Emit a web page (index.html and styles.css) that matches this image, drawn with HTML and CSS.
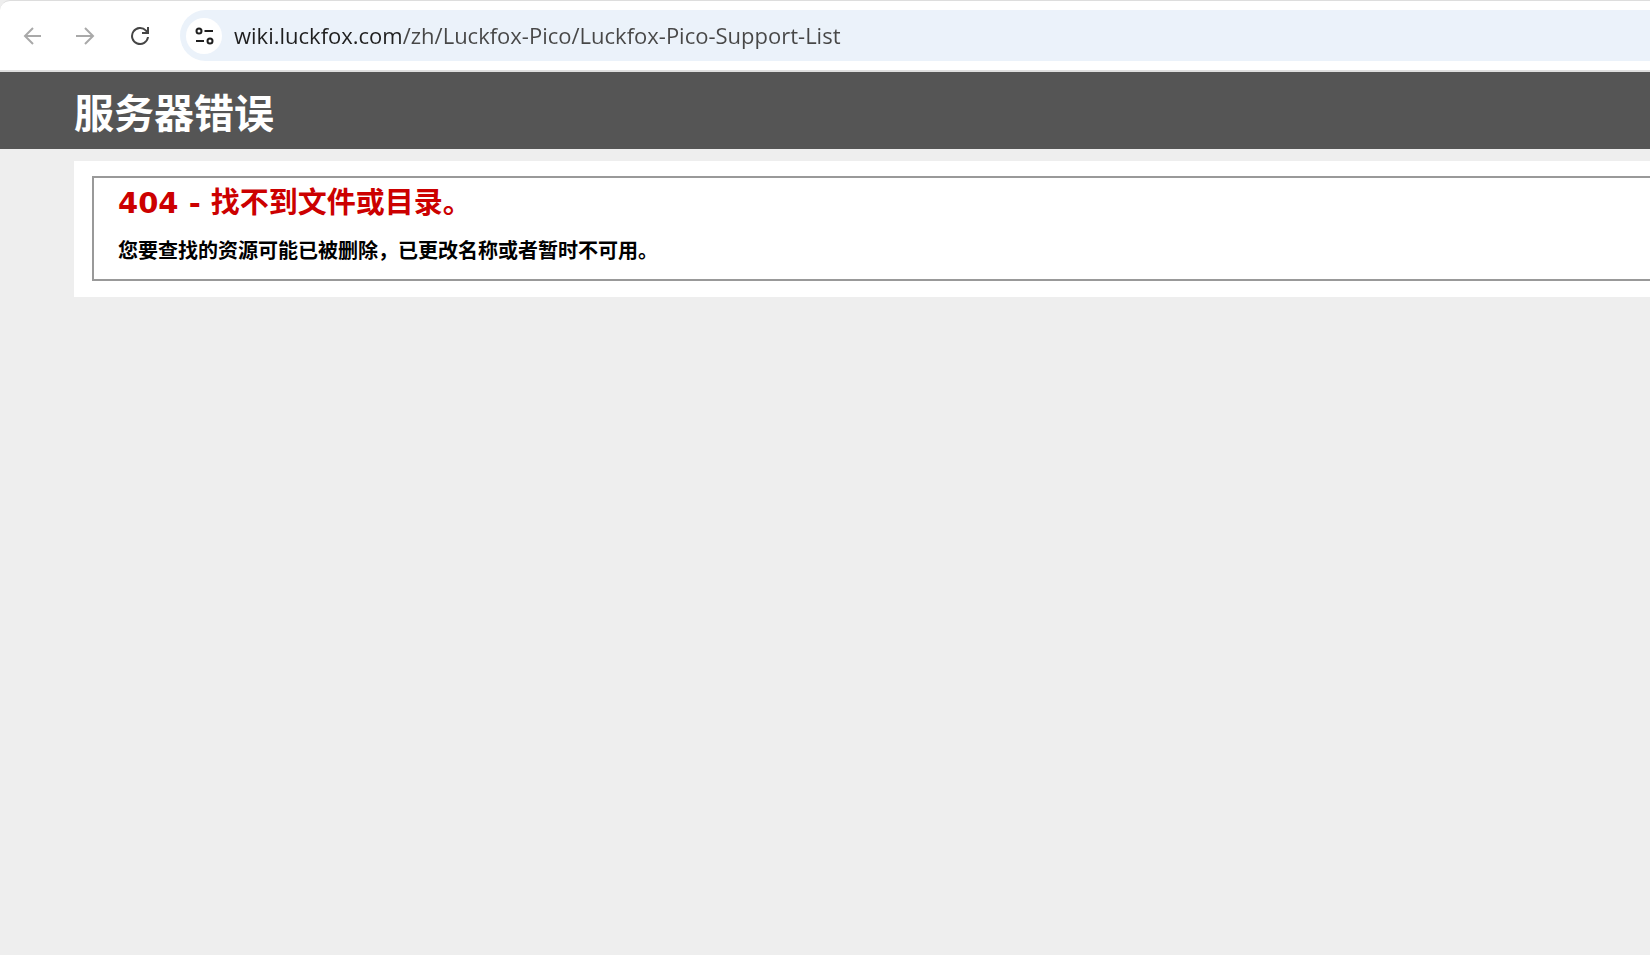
FILE: index.html
```html
<!DOCTYPE html>
<html lang="zh-CN">
<head>
  <meta charset="UTF-8" />
  <meta name="viewport" content="width=device-width, initial-scale=1.0"/>
  <title>404 - 找不到文件或目录。</title>
  <link rel="stylesheet" href="styles.css">
</head>
<body>
  <div class="browser">
    <nav class="toolbar">
      <button class="nav-btn disabled" type="button" aria-label="后退" disabled>
        <svg width="20" height="20" viewBox="0 0 20 20"><path d="M19 10H3M11 2L3 10L11 18"/></svg>
      </button>
      <button class="nav-btn disabled" type="button" aria-label="前进" disabled>
        <svg width="20" height="20" viewBox="0 0 20 20"><path d="M0 10H17M9 2L17 10L9 18"/></svg>
      </button>
      <button class="nav-btn reload" type="button" aria-label="重新加载">
        <svg width="20" height="20" viewBox="0 0 20 20"><path d="M18 11A8 8 0 1 1 16 4.700L18 7M18 1V7H12"/></svg>
      </button>
    </nav>
    <div class="omnibox">
      <button class="site-info" type="button" aria-label="查看网站信息">
        <svg width="20" height="20" viewBox="0 0 20 20">
          <circle cx="5" cy="5" r="2.500"/>
          <path d="M10.500 5H19M2 15H10"/>
          <circle cx="16" cy="15" r="2.500"/>
        </svg>
      </button>
      <input class="url" type="text" aria-label="地址" spellcheck="false" value="wiki.luckfox.com/zh/Luckfox-Pico/Luckfox-Pico-Support-List">
    </div>
  </div>

  <header class="header">
    <h1>服务器错误</h1>
  </header>

  <main class="content">
    <fieldset>
      <h2>404 - 找不到文件或目录。</h2>
      <h3>您要查找的资源可能已被删除，已更改名称或者暂时不可用。</h3>
    </fieldset>
  </main>
</body>
</html>
```

FILE: styles.css
```css
body {
  margin: 0;
  font-family: "DejaVu Sans", "Noto Sans CJK SC", sans-serif;
  background: #eee;
  overflow-x: hidden;
}

h1, h2, h3 {
  margin: 0;
  font-weight: bold;
}

.browser {
  display: flex;
  align-items: center;
  padding: 9px 0;
  background: #fff;
  border-top: 1px solid #ddd;
  border-bottom: 2px solid #dedede;
  border-top-left-radius: 10px;
}

.toolbar {
  display: flex;
  gap: 18px;
  padding: 0 22px 0 14px;
}

.nav-btn,
.site-info {
  display: flex;
  align-items: center;
  justify-content: center;
  width: 36px;
  height: 36px;
  padding: 0;
  border: 0;
  border-radius: 50%;
  background: none;
}

svg {
  fill: none;
  stroke: #1f1f1f;
  stroke-width: 2;
}

.disabled svg {
  stroke: #a9a9a9;
}

.reload svg {
  stroke: #454545;
}

.omnibox {
  display: flex;
  flex: 1;
  align-items: center;
  gap: 12px;
  height: 51px;
  padding-left: 6px;
  border-radius: 26px 0 0 26px;
  background: #ebf2fa;
}

.site-info {
  background: #fff;
}

/* host is darker than the path */
.url {
  flex: 1;
  height: 36px;
  padding: 0 0 2px;
  border: 0;
  outline: 0;
  font-family: "Open Sans", "Noto Sans", sans-serif;
  font-size: 22px;
  color: #474747;
  background: linear-gradient(90deg, #1f1f1f 168px, #474747 168px);
  -webkit-background-clip: text;
  background-clip: text;
  -webkit-text-fill-color: transparent;
}

.header {
  padding: 12px 74px 5px;
  background: #555;
  color: #fff;
}

h1 {
  font-size: 40px;
  line-height: 60px;
}

.content {
  margin: 12px 0 0 74px;
  padding: 15px 0 16px 18px;
  background: #fff;
}

fieldset {
  margin: 0;
  padding: 9px 24px 14px;
  border: 2px solid #999;
  border-right: 0;
}

h2 {
  font-size: 29px;
  line-height: 32px;
  color: #c00;
}

h3 {
  margin-top: 18px;
  font-size: 20px;
  line-height: 28px;
  color: #000;
}
```
